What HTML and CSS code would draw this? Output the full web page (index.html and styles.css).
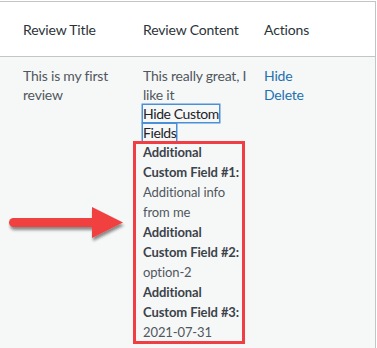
FILE: index.html
```html
<!DOCTYPE html>
<html>
<head>
<meta charset="utf-8">
<link rel="stylesheet" href="styles.css">
</head>
<body>
<div class="frame">
  <div class="table">
    <div class="row head">
      <div class="cell c1">Review Title</div>
      <div class="cell c2">Review Content</div>
      <div class="cell c3">Actions</div>
    </div>
    <div class="row body">
      <div class="cell c1">This is my first review</div>
      <div class="cell c2">
        <div class="content">This really great, I like it</div>
        <div class="toggle"><a class="focus">Hide Custom Fields</a></div>
        <div class="fields">
          <div class="label">Additional Custom Field #1:</div>
          <div class="value">Additional info from me</div>
          <div class="label">Additional Custom Field #2:</div>
          <div class="value">option-2</div>
          <div class="label">Additional Custom Field #3:</div>
          <div class="value">2021-07-31</div>
          <div class="highlight"></div>
        </div>
      </div>
      <div class="cell c3">
        <a class="link">Hide</a>
        <a class="link">Delete</a>
      </div>
    </div>
  </div>
  <svg class="arrow" width="120" height="40" viewBox="0 0 120 40">
    <defs>
      <filter id="sh" x="-10%" y="-30%" width="120%" height="160%">
        <feGaussianBlur in="SourceAlpha" stdDeviation="1.5"/>
        <feOffset dx="1" dy="3" result="b"/>
        <feComponentTransfer><feFuncA type="linear" slope="0.45"/></feComponentTransfer>
        <feMerge><feMergeNode/><feMergeNode in="SourceGraphic"/></feMerge>
      </filter>
    </defs>
    <g filter="url(#sh)" fill="#f04141">
      <rect x="1" y="12" width="88" height="9" rx="4.5"/>
      <polygon points="84,1 84,32 115,16.5"/>
    </g>
  </svg>
</div>
</body>
</html>
```
FILE: styles.css
```css
html, body {
  margin: 0;
  padding: 0;
  background: #fff;
}
body {
  font-family: Lato, "Noto Sans", sans-serif;
  width: 377px;
  height: 348px;
  overflow: hidden;
}
.frame {
  position: relative;
  padding-top: 1px;
  width: 376px;
  height: 347px;
}
.table {
  width: 375px;
  height: 346px;
  border-top: 1px solid #c3c4c7;
  border-right: 1px solid #c3c4c7;
  display: flex;
  flex-direction: column;
}
.row {
  display: grid;
  grid-template-columns: 143px 121px 1fr;
}
.cell:first-child {
  padding-left: 23px;
}
.head {
  height: 54px;
  border-bottom: 1px solid #c3c4c7;
  background: #fff;
  align-items: center;
  font-size: 14px;
  color: #2c3338;
  letter-spacing: -0.15px;
}
.head .cell {
  padding-top: 1px;
}
.body {
  flex: 1;
  background: #f6f7f7;
  font-size: 14px;
  line-height: 19px;
  color: #50575e;
  padding-top: 9px;
  letter-spacing: -0.2px;
}
.c1 {
  padding-right: 30px;
}
.c2 {
  padding-right: 8px;
}
.toggle {
  width: 100px;
}
.focus {
  color: #1d2327;
  box-shadow: 0 0 0 1.5px #4a90d9;
  -webkit-box-decoration-break: clone;
  box-decoration-break: clone;
  letter-spacing: -0.4px;
}
.fields {
  position: relative;
  font-size: 13px;
  line-height: 20px;
  color: #50575e;
  width: 100px;
  letter-spacing: -0.1px;
}
.label {
  font-weight: 700;
  color: #3c434a;
}
.highlight {
  position: absolute;
  left: -10px;
  top: -1px;
  width: 106px;
  height: 197px;
  border: 3px solid #f03e44;
}
.c3 {
  display: flex;
  flex-direction: column;
  align-items: flex-start;
}
.link {
  color: #2271b1;
}
.arrow {
  position: absolute;
  left: 8px;
  top: 206px;
}
```
